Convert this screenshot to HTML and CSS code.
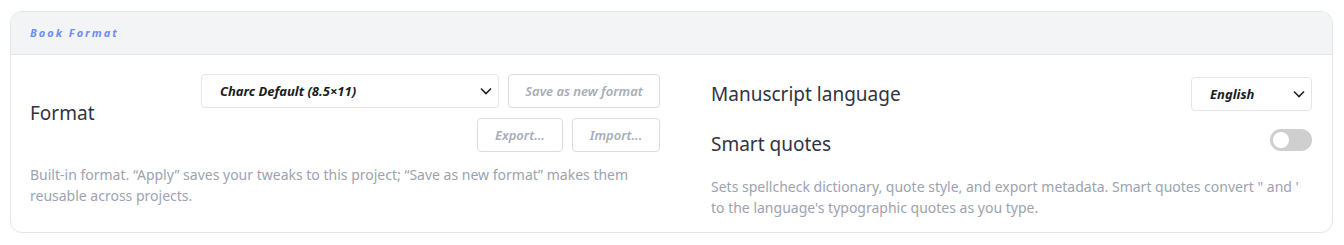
FILE: index.html
```html
<!DOCTYPE html>
<html lang="en">

<head>
    <meta charset="UTF-8">
    <meta name="viewport" content="width=device-width, initial-scale=1.0">
    <title>Book Format</title>
    <link rel="stylesheet" href="styles.css">
</head>

<body>
    <div class="card">
        <div class="card-head">Book Format</div>
        <div class="card-body">
            <div class="col">
                <div class="row format-row">
                    <div class="label">Format</div>
                    <div class="controls">
                        <div class="line">
                            <div class="select wide">Charc Default (8.5×11)
                                <svg class="chev" viewBox="0 0 12 8" width="12" height="8"><path d="M1 1.5l5 5 5-5" /></svg>
                            </div>
                            <button class="button save">Save as new format</button>
                        </div>
                        <div class="line right">
                            <button class="button export">Export...</button>
                            <button class="button import">Import...</button>
                        </div>
                    </div>
                </div>
                <p class="hint">Built-in format. “Apply” saves your tweaks to this project; “Save as new format” makes them reusable across projects.</p>
            </div>
            <div class="col">
                <div class="row lang-row">
                    <div class="label">Manuscript language</div>
                    <div class="select small">English
                        <svg class="chev" viewBox="0 0 12 8" width="12" height="8"><path d="M1 1.5l5 5 5-5" /></svg>
                    </div>
                </div>
                <div class="row quote-row">
                    <div class="label">Smart quotes</div>
                    <div class="toggle"></div>
                </div>
                <p class="hint">Sets spellcheck dictionary, quote style, and export metadata. Smart quotes convert " and ' to the language's typographic quotes as you type.</p>
            </div>
        </div>
    </div>
</body>

</html>
```

FILE: styles.css
```css
body {
    margin: 0;
    padding: 11px 11px 0 10px;
    background: #fff;
    font-family: "Noto Sans", "Open Sans", sans-serif;
}

.card {
    border: 1px solid #e3e5e8;
    border-radius: 12px;
    overflow: hidden;
}

.card-head {
    height: 42px;
    line-height: 42px;
    padding-left: 19px;
    background-color: #f3f4f6;
    border-bottom: 1px solid #e3e5e8;
    font-size: 11px;
    font-weight: 700;
    font-style: italic;
    letter-spacing: 2px;
    color: #6b8ef2;
}

.card-body {
    display: grid;
    grid-template-columns: 630px 601px;
    column-gap: 51px;
    padding: 19px 19px 0;
    height: 158px;
}

.row {
    display: flex;
    align-items: center;
    justify-content: space-between;
}

.label {
    font-size: 19px;
    color: #2f3440;
}

.controls {
    display: flex;
    flex-direction: column;
    gap: 10px;
    width: 459px;
}

.line {
    display: flex;
    gap: 9px;
}

.line.right {
    justify-content: flex-end;
}

.select {
    display: flex;
    align-items: center;
    justify-content: space-between;
    box-sizing: border-box;
    height: 34px;
    border: 1px solid #e3e5e8;
    border-radius: 4px;
    font-size: 13px;
    font-weight: 700;
    font-style: italic;
    color: #1a1d24;
}

.select.wide {
    width: 298px;
    padding: 0 6px 0 18px;
}

.select.small {
    width: 121px;
    padding: 0 6px 0 18px;
}

.chev {
    fill: none;
    stroke: #222;
    stroke-width: 1.6;
}

.button {
    box-sizing: border-box;
    height: 34px;
    background: #fff;
    border: 1px solid #d9dce0;
    border-radius: 4px;
    font-family: inherit;
    font-size: 13px;
    font-weight: 600;
    font-style: italic;
    color: #a8adb6;
    padding: 0;
}

.button.save {
    width: 152px;
}

.button.export {
    width: 86px;
}

.button.import {
    width: 88px;
}

.hint {
    margin: 12px 0 0;
    font-size: 14px;
    line-height: 21px;
    color: #9ca3af;
}

.lang-row {
    height: 38px;
    margin-top: 1px;
}

.quote-row {
    height: 30px;
    margin-top: 16px;
}

.quote-row + .hint {
    margin-top: 17px;
}

.toggle {
    width: 42px;
    height: 22px;
    border-radius: 11px;
    background-color: #cfcfcf;
    position: relative;
    margin-top: -8px;
}

.toggle::after {
    content: '';
    position: absolute;
    top: 3px;
    left: 3px;
    width: 16px;
    height: 16px;
    border-radius: 50%;
    background-color: #fff;
}
```
